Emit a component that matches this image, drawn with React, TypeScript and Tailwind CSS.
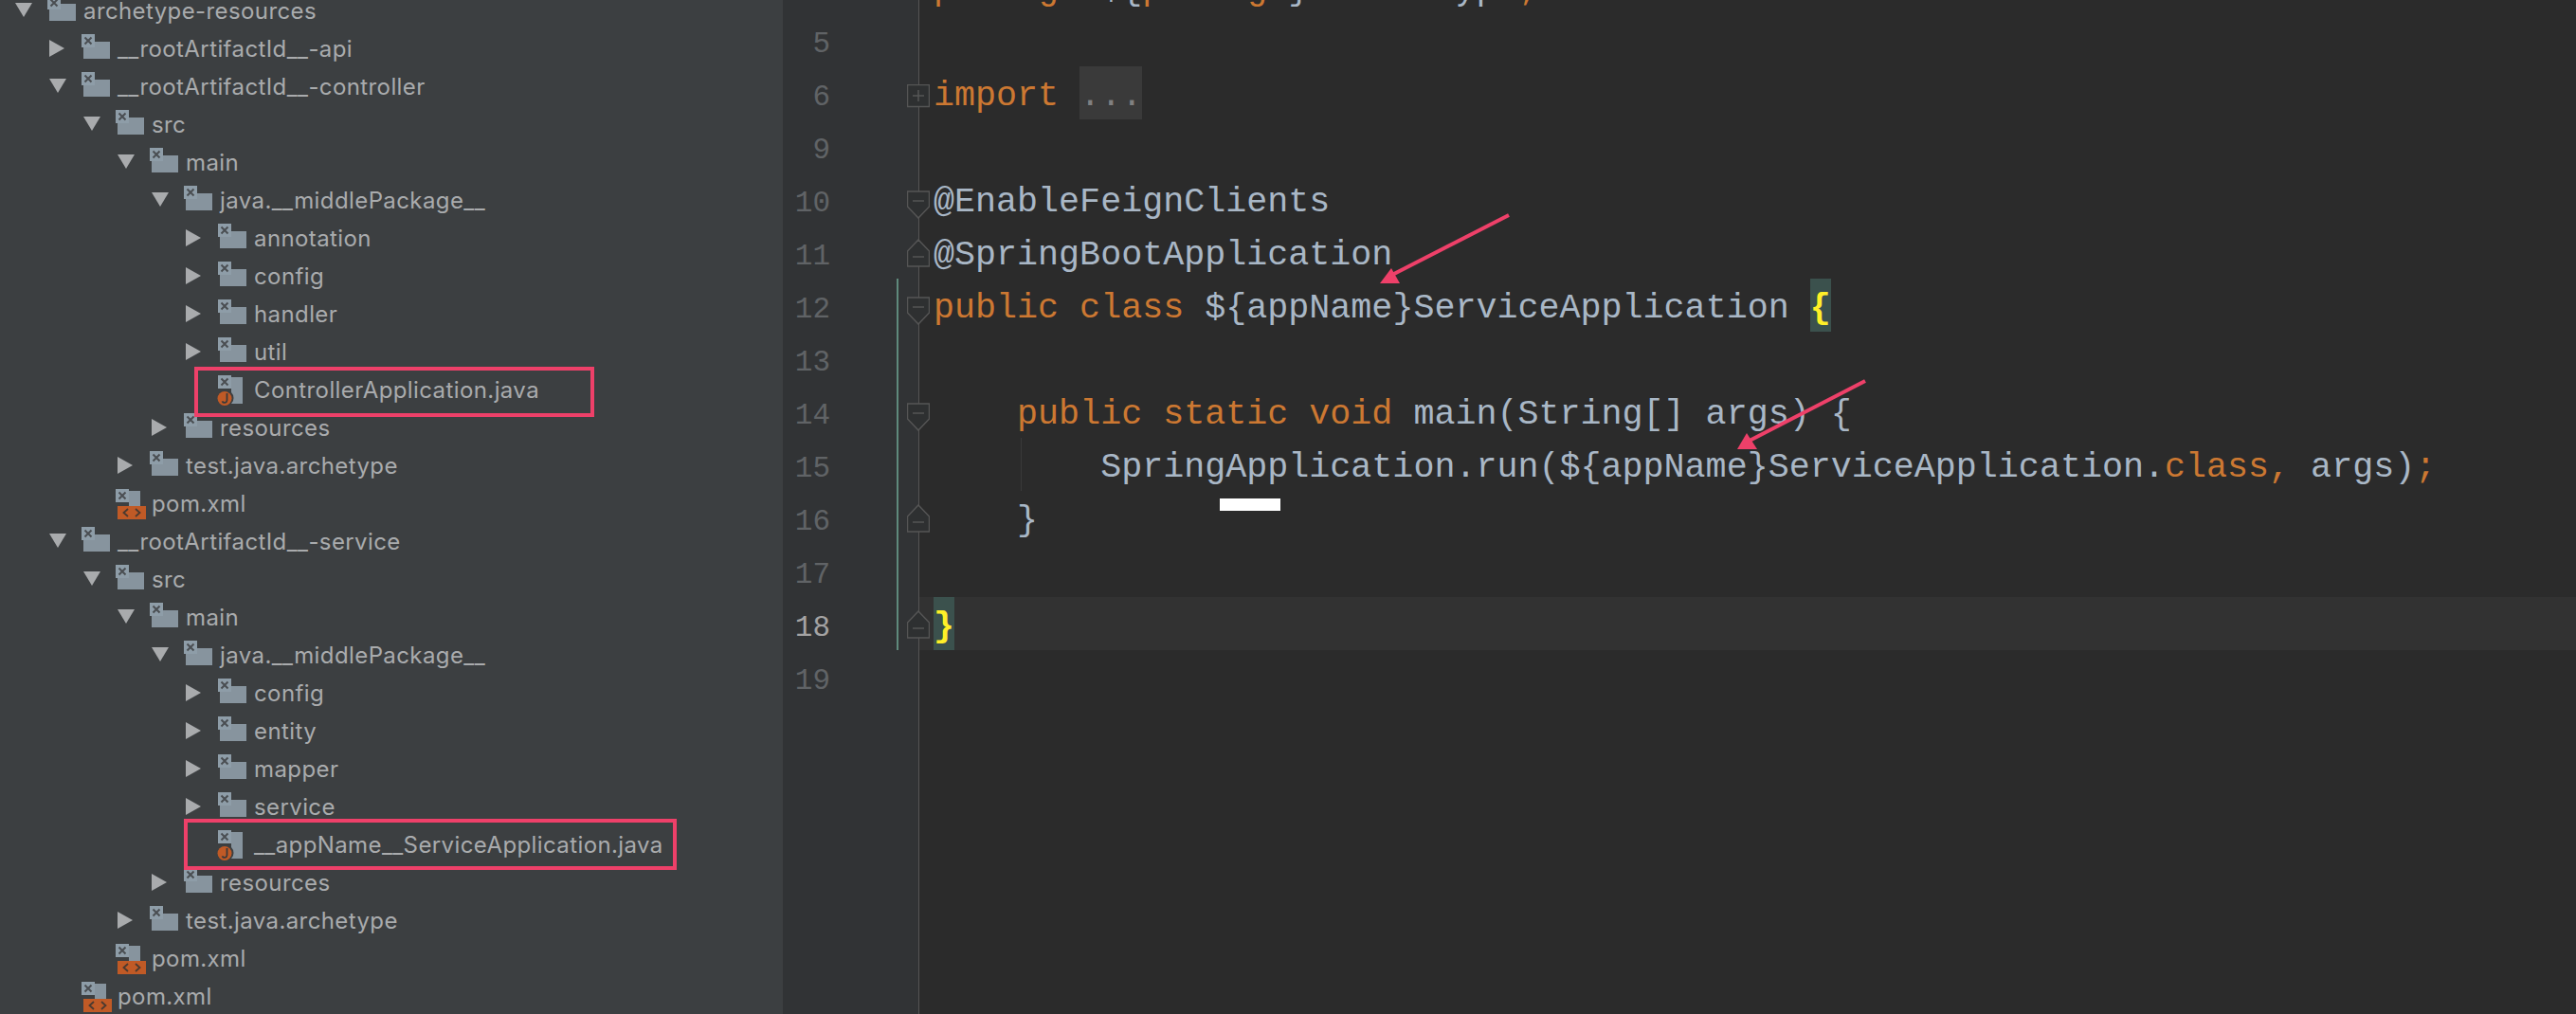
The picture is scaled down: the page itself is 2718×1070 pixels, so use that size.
import * as React from 'react';

type RowKind = 'folder' | 'java' | 'pom';

interface TreeRow {
  label: string;
  level: number;
  kind: RowKind;
  open?: boolean;
}

const tree: TreeRow[] = [
  { label: 'archetype-resources', level: 0, kind: 'folder', open: true },
  { label: '__rootArtifactId__-api', level: 1, kind: 'folder', open: false },
  { label: '__rootArtifactId__-controller', level: 1, kind: 'folder', open: true },
  { label: 'src', level: 2, kind: 'folder', open: true },
  { label: 'main', level: 3, kind: 'folder', open: true },
  { label: 'java.__middlePackage__', level: 4, kind: 'folder', open: true },
  { label: 'annotation', level: 5, kind: 'folder', open: false },
  { label: 'config', level: 5, kind: 'folder', open: false },
  { label: 'handler', level: 5, kind: 'folder', open: false },
  { label: 'util', level: 5, kind: 'folder', open: false },
  { label: 'ControllerApplication.java', level: 5, kind: 'java' },
  { label: 'resources', level: 4, kind: 'folder', open: false },
  { label: 'test.java.archetype', level: 3, kind: 'folder', open: false },
  { label: 'pom.xml', level: 2, kind: 'pom' },
  { label: '__rootArtifactId__-service', level: 1, kind: 'folder', open: true },
  { label: 'src', level: 2, kind: 'folder', open: true },
  { label: 'main', level: 3, kind: 'folder', open: true },
  { label: 'java.__middlePackage__', level: 4, kind: 'folder', open: true },
  { label: 'config', level: 5, kind: 'folder', open: false },
  { label: 'entity', level: 5, kind: 'folder', open: false },
  { label: 'mapper', level: 5, kind: 'folder', open: false },
  { label: 'service', level: 5, kind: 'folder', open: false },
  { label: '__appName__ServiceApplication.java', level: 5, kind: 'java' },
  { label: 'resources', level: 4, kind: 'folder', open: false },
  { label: 'test.java.archetype', level: 3, kind: 'folder', open: false },
  { label: 'pom.xml', level: 2, kind: 'pom' },
  { label: 'pom.xml', level: 1, kind: 'pom' },
];

function Arrow({ open }: { open?: boolean }) {
  return (
    <svg width="36" height="40" viewBox="0 0 36 40" className="shrink-0">
      {open === undefined ? null : open ? (
        <polygon points="0,11 18,11 9,26" fill="#a9abad" />
      ) : (
        <polygon points="0,10 16,19 0,28" fill="#a9abad" />
      )}
    </svg>
  );
}

// little "excluded" badge sitting on every icon in the tree
function XBadge() {
  return (
    <>
      <rect x="-2" y="4" width="14" height="14" fill="#8e9da8" />
      <path d="M1.5 7.5l7 7M8.5 7.5l-7 7" stroke="#4a4e52" strokeWidth="2" />
    </>
  );
}

function RowIcon({ kind }: { kind: RowKind }) {
  return (
    <svg width="36" height="40" viewBox="0 0 36 40" className="shrink-0 overflow-visible">
      {kind === 'folder' && (
        <>
          <polygon points="0,18 12,18 12,12 28,12 28,30 0,30" fill="#87949e" />
          <XBadge />
        </>
      )}
      {kind === 'java' && (
        <>
          <rect x="12" y="6" width="12" height="28" fill="#87949e" />
          <XBadge />
          <circle cx="6" cy="28" r="8.5" fill="#3c3f41" />
          <circle cx="5" cy="28.5" r="7.5" fill="#c05a26" />
          <path d="M7.5 23v7.5a2.6 2.6 0 0 1-5 .8" fill="none" stroke="#3a3a3a" strokeWidth="1.8" />
        </>
      )}
      {kind === 'pom' && (
        <>
          <rect x="12" y="6" width="12" height="16" fill="#87949e" />
          <XBadge />
          <rect x="0" y="22" width="30" height="14" fill="#c05a26" />
          <path d="M11 25l-4.500 4 4.500 4M19 25l4.500 4-4.500 4" fill="none" stroke="#4a3a30" strokeWidth="1.8" />
        </>
      )}
    </svg>
  );
}

const kw = 'text-[#cc7832]';

interface CodeLine {
  no: number;
  fold?: 'plus' | 'down' | 'up';
  body: React.ReactNode;
}

const lines: CodeLine[] = [
  {
    no: 4,
    body: (
      <>
        <span className={kw}>package</span> ${'{'}
        <span className={kw}>package</span>
        {'}'}.archetype<span className={kw}>;</span>
      </>
    ),
  },
  { no: 5, body: null },
  {
    no: 6,
    fold: 'plus',
    body: (
      <>
        <span className={kw}>import</span>{' '}
        <span className="inline-block h-14 bg-[#3a3a3a] align-top text-[#808080]">...</span>
      </>
    ),
  },
  { no: 9, body: null },
  { no: 10, fold: 'down', body: '@EnableFeignClients' },
  { no: 11, fold: 'up', body: '@SpringBootApplication' },
  {
    no: 12,
    fold: 'down',
    body: (
      <>
        <span className={kw}>public class</span> ${'{appName}'}ServiceApplication{' '}
        <span className="inline-block h-14 bg-[#3b514d] align-top font-bold text-[#ffef28]">{'{'}</span>
      </>
    ),
  },
  { no: 13, body: null },
  {
    no: 14,
    fold: 'down',
    body: (
      <>
        {'    '}
        <span className={kw}>public static void</span> main(String[] args) {'{'}
      </>
    ),
  },
  {
    no: 15,
    body: (
      <>
        {'        '}SpringApplication.run(${'{appName}'}ServiceApplication.
        <span className={kw}>class,</span> args)<span className={kw}>;</span>
      </>
    ),
  },
  { no: 16, fold: 'up', body: '    }' },
  { no: 17, body: null },
  {
    no: 18,
    fold: 'up',
    body: <span className="inline-block h-14 bg-[#3b514d] align-top font-bold text-[#ffef28]">{'}'}</span>,
  },
  { no: 19, body: null },
];

function FoldMark({ type }: { type: 'plus' | 'down' | 'up' }) {
  return (
    <svg
      width="24"
      height="30"
      viewBox="0 0 24 30"
      className={`absolute left-[131px] ${type === 'up' ? 'top-[14px]' : 'top-[19px]'}`}
    >
      {type === 'plus' && (
        <>
          <rect x="0.5" y="0.500" width="23" height="23" fill="#2e3031" stroke="#555555" strokeWidth="1.500" />
          <path d="M6 12h12M12 6v12" stroke="#555555" strokeWidth="1.500" />
        </>
      )}
      {type === 'down' && (
        <>
          <polygon points="0.500,1 23.500,1 23.500,17 12,29 0.500,17" fill="#2e3031" stroke="#555555" strokeWidth="1.500" />
          <path d="M6 11h12" stroke="#555555" strokeWidth="1.500" />
        </>
      )}
      {type === 'up' && (
        <>
          <polygon points="0.500,29 23.500,29 23.500,13 12,1 0.500,13" fill="#2e3031" stroke="#555555" strokeWidth="1.500" />
          <path d="M6 19h12" stroke="#555555" strokeWidth="1.500" />
        </>
      )}
    </svg>
  );
}

export default function App() {
  return (
    <div className="relative flex h-[1070px] w-[2718px] overflow-hidden bg-[#2b2b2b]">
      {/* Project tree */}
      <aside className="-mt-2 w-[826px] shrink-0 bg-[#3c3f41] font-['Inter',sans-serif] text-[24px] tracking-[0.4px] text-[#a9abad]">
        {tree.map((row, i) => (
          <div
            key={i}
            className="flex h-10 items-center whitespace-pre"
            style={{ paddingLeft: 16 + row.level * 36 }}
          >
            <Arrow open={row.open} />
            <RowIcon kind={row.kind} />
            <span>{row.label}</span>
          </div>
        ))}
      </aside>

      {/* Line numbers and fold marks */}
      <div className="relative -mt-[42px] w-[144px] shrink-0 border-r border-[#555555] bg-[#313335] font-['Liberation_Mono',monospace] text-[31px] leading-[66px] text-[#606366]">
        {lines.map((line) => (
          <div key={line.no} className="relative h-14">
            <div className={`w-[50px] text-right ${line.no === 18 ? 'text-[#a4a3a3]' : ''}`}>
              {line.no === 4 ? '' : line.no}
            </div>
            {line.fold && <FoldMark type={line.fold} />}
          </div>
        ))}
      </div>

      {/* Code */}
      <main className="-mt-[42px] min-w-0 flex-1 font-['Liberation_Mono',monospace] text-[36.7px] leading-[63px] text-[#a9b7c6]">
        {lines.map((line) => (
          <div
            key={line.no}
            className={`h-14 whitespace-pre pl-[15px] ${line.no === 18 ? 'bg-[#323232]' : ''}`}
          >
            {line.body}
          </div>
        ))}
      </main>

      {/* VCS change marker and indent guide */}
      <div className="absolute left-[946px] top-[294px] h-[392px] w-[2px] bg-[#5f8a7c]" />
      <div className="absolute left-[1077px] top-[462px] h-14 w-px bg-[#3a3a3a]" />

      {/* Annotations on top of the screenshot */}
      <div className="absolute left-[205px] top-[387px] h-[53px] w-[422px] border-4 border-[#ee4069]" />
      <div className="absolute left-[194px] top-[864px] h-[54px] w-[520px] border-4 border-[#ee4069]" />
      <div className="absolute left-[1287px] top-[526px] h-[13px] w-[64px] bg-white" />
      <svg width="2718" height="1070" viewBox="0 0 2718 1070" className="pointer-events-none absolute left-0 top-0">
        <path d="M1592 227L1465 292" stroke="#ee4069" strokeWidth="4" />
        <polygon points="1456,299 1477,299 1468,283" fill="#ee4069" />
        <path d="M1968 402L1842 467" stroke="#ee4069" strokeWidth="4" />
        <polygon points="1833,474 1854,474 1843,457" fill="#ee4069" />
      </svg>
    </div>
  );
}
